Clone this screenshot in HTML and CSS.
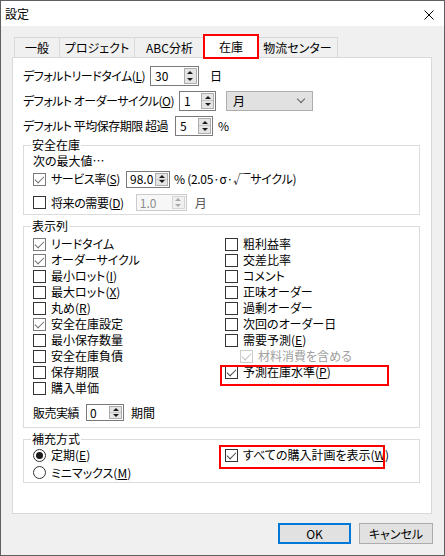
FILE: index.html
```html
<!DOCTYPE html>
<html lang="ja">
<head>
  <meta charset="UTF-8" />
  <title>設定</title>
  <link rel="stylesheet" href="styles.css">
</head>
<body>
  <div class="window">
    <div class="titlebar">
      <span class="title">設定</span>
      <svg class="close-icon" width="10" height="10" viewBox="0 0 10 10">
        <path d="M0.5 0.5 L9.5 9.5 M9.5 0.5 L0.5 9.5" stroke="#000" stroke-width="1" fill="none" />
      </svg>
    </div>

    <div class="dialog">
      <div class="tabs">
        <div class="tab tab-general">一般</div>
        <div class="tab tab-project">プロジェクト</div>
        <div class="tab tab-abc">ABC分析</div>
        <div class="tab tab-active">在庫</div>
        <div class="tab tab-dc">物流センター</div>
      </div>

      <div class="panel">
        <div class="field-row">
          <span class="label label-lead">デフォルトリードタイム(<u>L</u>)</span>
          <div class="spin spin-lead"><span class="spin-value">30</span><span class="spin-btn"></span></div>
          <span class="unit unit-day">日</span>
        </div>
        <div class="field-row">
          <span class="label label-cycle">デフォルト オーダーサイクル(<u>O</u>)</span>
          <div class="spin spin-cycle"><span class="spin-value">1</span><span class="spin-btn"></span></div>
          <div class="select"><span>月</span><span class="chevron"></span></div>
        </div>
        <div class="field-row">
          <span class="label label-over">デフォルト 平均保存期限 超過</span>
          <div class="spin spin-over"><span class="spin-value">5</span><span class="spin-btn"></span></div>
          <span class="unit unit-pct">%</span>
        </div>

        <fieldset class="group group-safety">
          <legend>安全在庫</legend>
          <div class="line">次の最大値…</div>
          <div class="check check-rate">
            <span class="box box-soft on"></span>
            <span class="check-label label-rate">サービス率(<u>S</u>)</span>
            <div class="spin spin-sm spin-rate"><span class="spin-value">98.0</span><span class="spin-btn"></span></div>
            <span class="unit unit-formula">% (2.05·σ·√‾サイクル)</span>
          </div>
          <div class="check check-future">
            <span class="box"></span>
            <span class="check-label label-future">将来の需要(<u>D</u>)</span>
            <div class="spin spin-sm spin-off spin-future"><span class="spin-value">1.0</span><span class="spin-btn"></span></div>
            <span class="unit unit-month">月</span>
          </div>
        </fieldset>

        <fieldset class="group group-columns">
          <legend>表示列</legend>
          <div class="columns">
            <div class="col">
              <div class="check"><span class="box box-soft on"></span>リードタイム</div>
              <div class="check"><span class="box box-soft on"></span>オーダーサイクル</div>
              <div class="check"><span class="box"></span>最小ロット(<u>I</u>)</div>
              <div class="check"><span class="box"></span>最大ロット(<u>X</u>)</div>
              <div class="check"><span class="box"></span>丸め(<u>R</u>)</div>
              <div class="check"><span class="box box-soft on"></span>安全在庫設定</div>
              <div class="check"><span class="box"></span>最小保存数量</div>
              <div class="check"><span class="box"></span>安全在庫負債</div>
              <div class="check"><span class="box"></span>保存期限</div>
              <div class="check"><span class="box"></span>購入単価</div>
            </div>
            <div class="col">
              <div class="check"><span class="box"></span>粗利益率</div>
              <div class="check"><span class="box"></span>交差比率</div>
              <div class="check"><span class="box"></span>コメント</div>
              <div class="check"><span class="box"></span>正味オーダー</div>
              <div class="check"><span class="box"></span>過剰オーダー</div>
              <div class="check"><span class="box"></span>次回のオーダー日</div>
              <div class="check"><span class="box"></span>需要予測(<u>E</u>)</div>
              <div class="check check-sub disabled"><span class="box on"></span>材料消費を含める</div>
              <div class="check marked mark-forecast"><span class="box on"></span>予測在庫水準(<u>P</u>)</div>
            </div>
          </div>
          <div class="sales-row">
            <span class="label label-sales">販売実績</span>
            <div class="spin spin-sm spin-sales"><span class="spin-value">0</span><span class="spin-btn"></span></div>
            <span class="unit">期間</span>
          </div>
        </fieldset>

        <fieldset class="group group-refill">
          <legend>補充方式</legend>
          <div class="columns">
            <div class="col">
              <div class="check radio-row"><span class="radio on"></span>定期(<u>E</u>)</div>
              <div class="check radio-row"><span class="radio"></span>ミニマックス(<u>M</u>)</div>
            </div>
            <div class="col">
              <div class="check radio-row marked mark-all"><span class="box on"></span>すべての購入計画を表示(<u>W</u>)</div>
            </div>
          </div>
        </fieldset>
      </div>

      <div class="buttons">
        <div class="btn btn-default">OK</div>
        <div class="btn">キャンセル</div>
      </div>
    </div>
  </div>
</body>
</html>
```

FILE: styles.css
```css
* {
  box-sizing: border-box;
}

body {
  margin: 0;
  font-family: "Noto Sans CJK JP", "Noto Sans", sans-serif;
  font-size: 12px;
  font-feature-settings: "palt";
  color: #000;
  background: #fff;
}

u {
  text-underline-offset: 1px;
}

.window {
  width: 445px;
  height: 556px;
  border: 1px solid #5f5f5f;
  background: #f0f0f0;
  display: flex;
  flex-direction: column;
}

.titlebar {
  height: 25px;
  background: #fff;
  display: flex;
  align-items: center;
  justify-content: space-between;
  padding: 0 10px 0 4px;
  line-height: 1;
}

.close-icon {
  display: block;
  margin-top: 2px;
}

.dialog {
  flex: 1;
  display: flex;
  flex-direction: column;
  padding: 9px 12px 0 11px;
}

/* tabs */
.tabs {
  display: flex;
  align-items: flex-end;
  height: 22px;
  margin-left: 2px;
}

.tab {
  height: 20px;
  display: flex;
  align-items: center;
  justify-content: center;
  border: 1px solid #d9d9d9;
  border-bottom: none;
  margin-right: -1px;
  background: #f0f0f0;
  line-height: 1;
  white-space: nowrap;
}

.tab-general { width: 46px; }
.tab-project { width: 76px; }
.tab-abc { width: 71px; }
.tab-dc { width: 81px; }

.tab-active {
  width: 54px;
  height: 23px;
  margin-bottom: -1px;
  background: #fff;
  position: relative;
  z-index: 1;
  outline: 2px solid #f00;
  outline-offset: -1px;
}

.panel {
  height: 457px;
  background: #fff;
  border: 1px solid #d9d9d9;
  padding: 8px 11px 0 10px;
}

/* top fields */
.field-row {
  display: flex;
  align-items: center;
  height: 20px;
  margin-bottom: 5px;
  line-height: 1;
}

.field-row:nth-child(3) {
  margin-bottom: 0;
}

.label,
.check-label,
.unit {
  flex: none;
  white-space: nowrap;
}

.label {
  letter-spacing: -0.5px;
  margin-right: 5px;
}

.label-lead { min-width: 118px; }
.label-cycle { min-width: 142px; }
.label-over { min-width: 147px; }

.unit-day { margin-left: 11px; }
.unit-pct { margin-left: 5px; }

.spin {
  flex: none;
  display: flex;
  align-items: center;
  height: 20px;
  border: 1px solid #7a7a7a;
  background: #fff;
  padding: 1px 1px 1px 4px;
  line-height: 1;
}

.spin-value {
  flex: 1;
}

.spin-btn {
  width: 13px;
  height: 100%;
  border: 1px solid #adadad;
  background: linear-gradient(#e5e5e5 0 calc(50% - 0.5px), #c4c4c4 calc(50% - 0.5px) calc(50% + 0.5px), #e5e5e5 calc(50% + 0.5px));
  display: flex;
  flex-direction: column;
  justify-content: space-around;
  align-items: center;
}

.spin-btn::before,
.spin-btn::after {
  content: '';
  border-left: 3px solid transparent;
  border-right: 3px solid transparent;
}

.spin-btn::before { border-bottom: 3px solid #1a1a1a; }
.spin-btn::after { border-top: 3px solid #1a1a1a; }

.spin-lead { width: 49px; }
.spin-cycle { width: 37px; }
.spin-over { width: 38px; }

.spin-sm {
  height: 17px;
  padding: 1px 1px 1px 3px;
}

.spin-rate { width: 44px; margin-left: 6px; }
.spin-future { width: 51px; margin-left: 12px; }
.spin-sales { width: 38px; margin-left: 2px; }

.spin-off {
  border-color: #cccccc;
  background: #f7f7f7;
  color: #8d8d8d;
}

.spin-off .spin-btn {
  border-color: #d5d5d5;
  background: #f0f0f0;
}

.spin-off .spin-btn::before { border-bottom-color: #a8a8a8; }
.spin-off .spin-btn::after { border-top-color: #a8a8a8; }

.select {
  flex: none;
  width: 87px;
  height: 20px;
  margin-left: 10px;
  display: flex;
  align-items: center;
  justify-content: space-between;
  padding: 0 8px 0 6px;
  background: #e1e1e1;
  border: 1px solid #adadad;
}

.chevron {
  width: 6px;
  height: 6px;
  border: solid #606060;
  border-width: 0 1px 1px 0;
  transform: rotate(45deg);
  margin-top: -4px;
}

/* group boxes */
.group {
  margin: 3px 0 0;
  padding: 0 0 0 9px;
  border: 1px solid #dcdcdc;
  min-width: 0;
}

.group legend {
  padding: 0 1px;
  margin-left: -2px;
  line-height: 12px;
  height: 12px;
}

.group-safety {
  padding-bottom: 3px;
}

.line {
  height: 17px;
  line-height: 17px;
  margin-top: 1px;
}

.check {
  display: flex;
  align-items: center;
  height: 16px;
  line-height: 1;
  white-space: nowrap;
}

.check-rate {
  height: 18px;
  margin-top: 1px;
}

.check-future {
  height: 17px;
  margin-top: 6px;
}

.label-rate { min-width: 66px; letter-spacing: -0.4px; }
.label-future { min-width: 72px; letter-spacing: -0.4px; }

.unit-formula { margin-left: 4px; letter-spacing: -0.3px; }
.unit-month { margin-left: 8px; color: #555; }

.box {
  width: 13px;
  height: 13px;
  flex: none;
  border: 1px solid #333;
  background: #fff;
  margin-right: 5px;
  position: relative;
}

.box-soft {
  border-color: #7a7a7a;
}

.box.on::after {
  content: '';
  position: absolute;
  left: 3px;
  top: 0px;
  width: 4px;
  height: 8px;
  border: solid #444;
  border-width: 0 1px 1px 0;
  transform: rotate(45deg);
}

.box-soft.on::after {
  border-color: #707070;
}

.disabled {
  color: #a0a0a0;
}

.disabled .box {
  border-color: #cccccc;
}

.disabled .box.on::after {
  border-color: #c0c0c0;
}

.group-columns {
  margin-top: 5px;
  padding-bottom: 6px;
}

.columns {
  display: flex;
  padding-top: 4px;
}

.col {
  display: flex;
  flex-direction: column;
}

.col:first-child {
  width: 192px;
}

.check-sub {
  padding-left: 15px;
}

.sales-row {
  display: flex;
  align-items: center;
  height: 17px;
  margin-top: 8px;
  line-height: 1;
}

.sales-row .unit {
  margin-left: 7px;
}

.group-refill {
  margin-top: 5px;
  padding-bottom: 1px;
}

.group-refill .columns {
  padding-top: 2px;
}

.radio-row {
  height: 16px;
}

.radio-row + .radio-row {
  height: 17px;
  margin-top: 1px;
}

.radio {
  width: 13px;
  height: 13px;
  flex: none;
  border: 1px solid #333;
  border-radius: 50%;
  background: #fff;
  margin-right: 5px;
  display: flex;
  align-items: center;
  justify-content: center;
}

.radio.on::after {
  content: '';
  width: 7px;
  height: 7px;
  border-radius: 50%;
  background: #1a1a1a;
}

/* red marks laid over the rows */
.marked {
  position: relative;
}

.marked::after {
  content: '';
  position: absolute;
  border: 2px solid #f00;
}

.mark-forecast::after {
  left: -5px;
  top: 1px;
  width: 165px;
  height: 17px;
}

.mark-all::after {
  left: -6px;
  top: -2px;
  width: 162px;
  height: 20px;
}

/* buttons */
.buttons {
  display: flex;
  justify-content: flex-end;
  gap: 8px;
  margin-top: 9px;
  margin-right: -1px;
}

.btn {
  width: 74px;
  height: 21px;
  display: flex;
  align-items: center;
  justify-content: center;
  background: #e1e1e1;
  border: 1px solid #adadad;
  line-height: 1;
}

.btn-default {
  width: 73px;
  border: 2px solid #0078d7;
}
```
